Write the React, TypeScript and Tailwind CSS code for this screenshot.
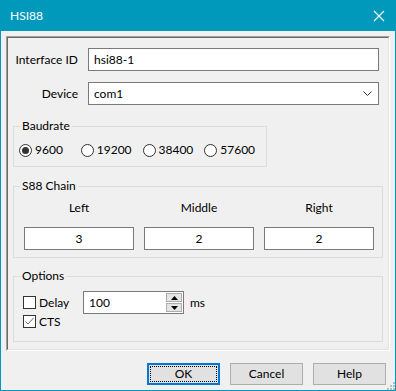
import React from "react";

function Radio({ checked, label }: { checked?: boolean; label: string }) {
  return (
    <div className="w-[62px] flex items-center gap-[3px]">
      <span className="w-[13px] h-[13px] rounded-full border border-[#333333] bg-white flex items-center justify-center shrink-0">
        {checked && <span className="w-[7px] h-[7px] rounded-full bg-[#333333]" />}
      </span>
      <span>{label}</span>
    </div>
  );
}

function Check({ checked }: { checked?: boolean }) {
  return (
    <span className="w-[13px] h-[13px] border border-[#333333] bg-white shrink-0 flex items-center justify-center">
      {checked && (
        <svg width="11" height="11" viewBox="0 0 11 11">
          <polyline points="1.5,5.5 4,8 9.5,2" fill="none" stroke="#666666" strokeWidth="1" />
        </svg>
      )}
    </span>
  );
}

function Group({ title, className, children }: { title: string; className: string; children: React.ReactNode }) {
  return (
    <fieldset className={`border border-[#dcdcdc] p-0 m-0 min-w-0 ${className}`}>
      <legend className="ml-[6px] px-[2px] leading-[16px]">{title}</legend>
      {children}
    </fieldset>
  );
}

export default function App() {
  return (
    <div className="w-[396px] h-[391px] border border-[#0099bc] flex flex-col bg-[#f0f0f0] overflow-hidden text-[12px] text-black font-['Lato',sans-serif]">
      <div className="h-[30px] shrink-0 bg-[#0099bc] flex items-center justify-between pl-[9px] pr-[9px] text-white">
        <span className="leading-[16px]">HSI88</span>
        <svg width="12" height="12" viewBox="0 0 12 12" className="mr-[1px]">
          <path d="M1 1 L11 11 M11 1 L1 11" stroke="#ffffff" strokeWidth="1.1" fill="none" />
        </svg>
      </div>
      <div className="relative flex-1 flex flex-col px-[5px] pt-[5px]">
        <div className="h-[315px] border border-t-[#a0a0a0] border-l-[#a0a0a0] border-b-white border-r-white">
          <div className="h-full border border-t-[#696969] border-l-[#696969] border-b-[#e3e3e3] border-r-[#e3e3e3] flex flex-col">
            <div className="mt-[10px] flex items-center">
              <span className="w-[70px] text-right leading-[16px]">Interface ID</span>
              <div className="ml-[10px] w-[291px] h-[23px] border border-[#7a7a7a] bg-white flex items-center pl-[5px]">hsi88-1</div>
            </div>
            <div className="mt-[11px] flex items-center">
              <span className="w-[70px] text-right leading-[16px]">Device</span>
              <div className="ml-[10px] w-[291px] h-[23px] border border-[#7a7a7a] bg-white flex items-center justify-between pl-[5px] pr-[6px]">
                <span>com1</span>
                <svg width="9" height="6" viewBox="0 0 9 6">
                  <polyline points="0.5,0.5 4.5,4.5 8.5,0.5" fill="none" stroke="#333333" strokeWidth="1" />
                </svg>
              </div>
            </div>

            <Group title="Baudrate" className="mt-[13px] ml-[5px] w-[254px]">
              <div className="flex items-center pl-[5px] pt-[8px] pb-[8px] leading-[16px]">
                <Radio checked label="9600" />
                <Radio label="19200" />
                <Radio label="38400" />
                <Radio label="57600" />
              </div>
            </Group>

            <Group title="S88 Chain" className="mt-[11px] ml-[5px] w-[370px]">
              <div className="pl-[10px] pt-[6px] pb-[7px] grid grid-cols-[110px_110px_110px] gap-x-[10px] leading-[16px]">
                <div className="text-center">Left</div>
                <div className="text-center">Middle</div>
                <div className="text-center">Right</div>
                <div className="mt-[11px] h-[23px] border border-[#7a7a7a] bg-white flex items-center justify-center">3</div>
                <div className="mt-[11px] h-[23px] border border-[#7a7a7a] bg-white flex items-center justify-center">2</div>
                <div className="mt-[11px] h-[23px] border border-[#7a7a7a] bg-white flex items-center justify-center">2</div>
              </div>
            </Group>

            <Group title="Options" className="mt-[10px] ml-[5px] w-[370px]">
              <div className="pl-[9px] pt-[7px] pb-[12px] flex flex-col leading-[16px]">
                <div className="flex items-center h-[23px]">
                  <Check />
                  <span className="ml-[3px] w-[44px]">Delay</span>
                  <div className="w-[101px] h-[23px] border border-[#7a7a7a] bg-white flex items-center justify-between pl-[5px] pr-[1px]">
                    <span>100</span>
                    <div className="flex flex-col gap-[1px]">
                      <div className="w-[16px] h-[9px] bg-[#e5e5e5] border border-[#adadad] flex items-center justify-center">
                        <svg width="7" height="4" viewBox="0 0 7 4"><polygon points="0,4 3.5,0 7,4" fill="#000" /></svg>
                      </div>
                      <div className="w-[16px] h-[9px] bg-[#e5e5e5] border border-[#adadad] flex items-center justify-center">
                        <svg width="7" height="4" viewBox="0 0 7 4"><polygon points="0,0 7,0 3.5,4" fill="#000" /></svg>
                      </div>
                    </div>
                  </div>
                  <span className="ml-[6px]">ms</span>
                </div>
                <div className="flex items-center h-[15px]">
                  <Check checked />
                  <span className="ml-[3px]">CTS</span>
                </div>
              </div>
            </Group>
          </div>
        </div>

        <div className="mt-[12px] flex justify-end gap-[10px] pr-[4px] leading-[16px]">
          <div className="w-[73px] h-[22px] border-2 border-[#0078d7] bg-[#e1e1e1] p-[1px]">
            <div className="w-full h-full border border-dotted border-black flex items-center justify-center">OK</div>
          </div>
          <div className="w-[73px] h-[22px] border border-[#adadad] bg-[#e1e1e1] flex items-center justify-center">Cancel</div>
          <div className="w-[73px] h-[22px] border border-[#adadad] bg-[#e1e1e1] flex items-center justify-center">Help</div>
        </div>

        <svg width="10" height="10" viewBox="0 0 10 10" className="absolute right-0 bottom-0">
          <rect x="8" y="2" width="2" height="2" fill="#bcbcbc" />
          <rect x="5" y="5" width="2" height="2" fill="#bcbcbc" />
          <rect x="8" y="5" width="2" height="2" fill="#bcbcbc" />
          <rect x="2" y="8" width="2" height="2" fill="#bcbcbc" />
          <rect x="5" y="8" width="2" height="2" fill="#bcbcbc" />
          <rect x="8" y="8" width="2" height="2" fill="#bcbcbc" />
        </svg>
      </div>
    </div>
  );
}
